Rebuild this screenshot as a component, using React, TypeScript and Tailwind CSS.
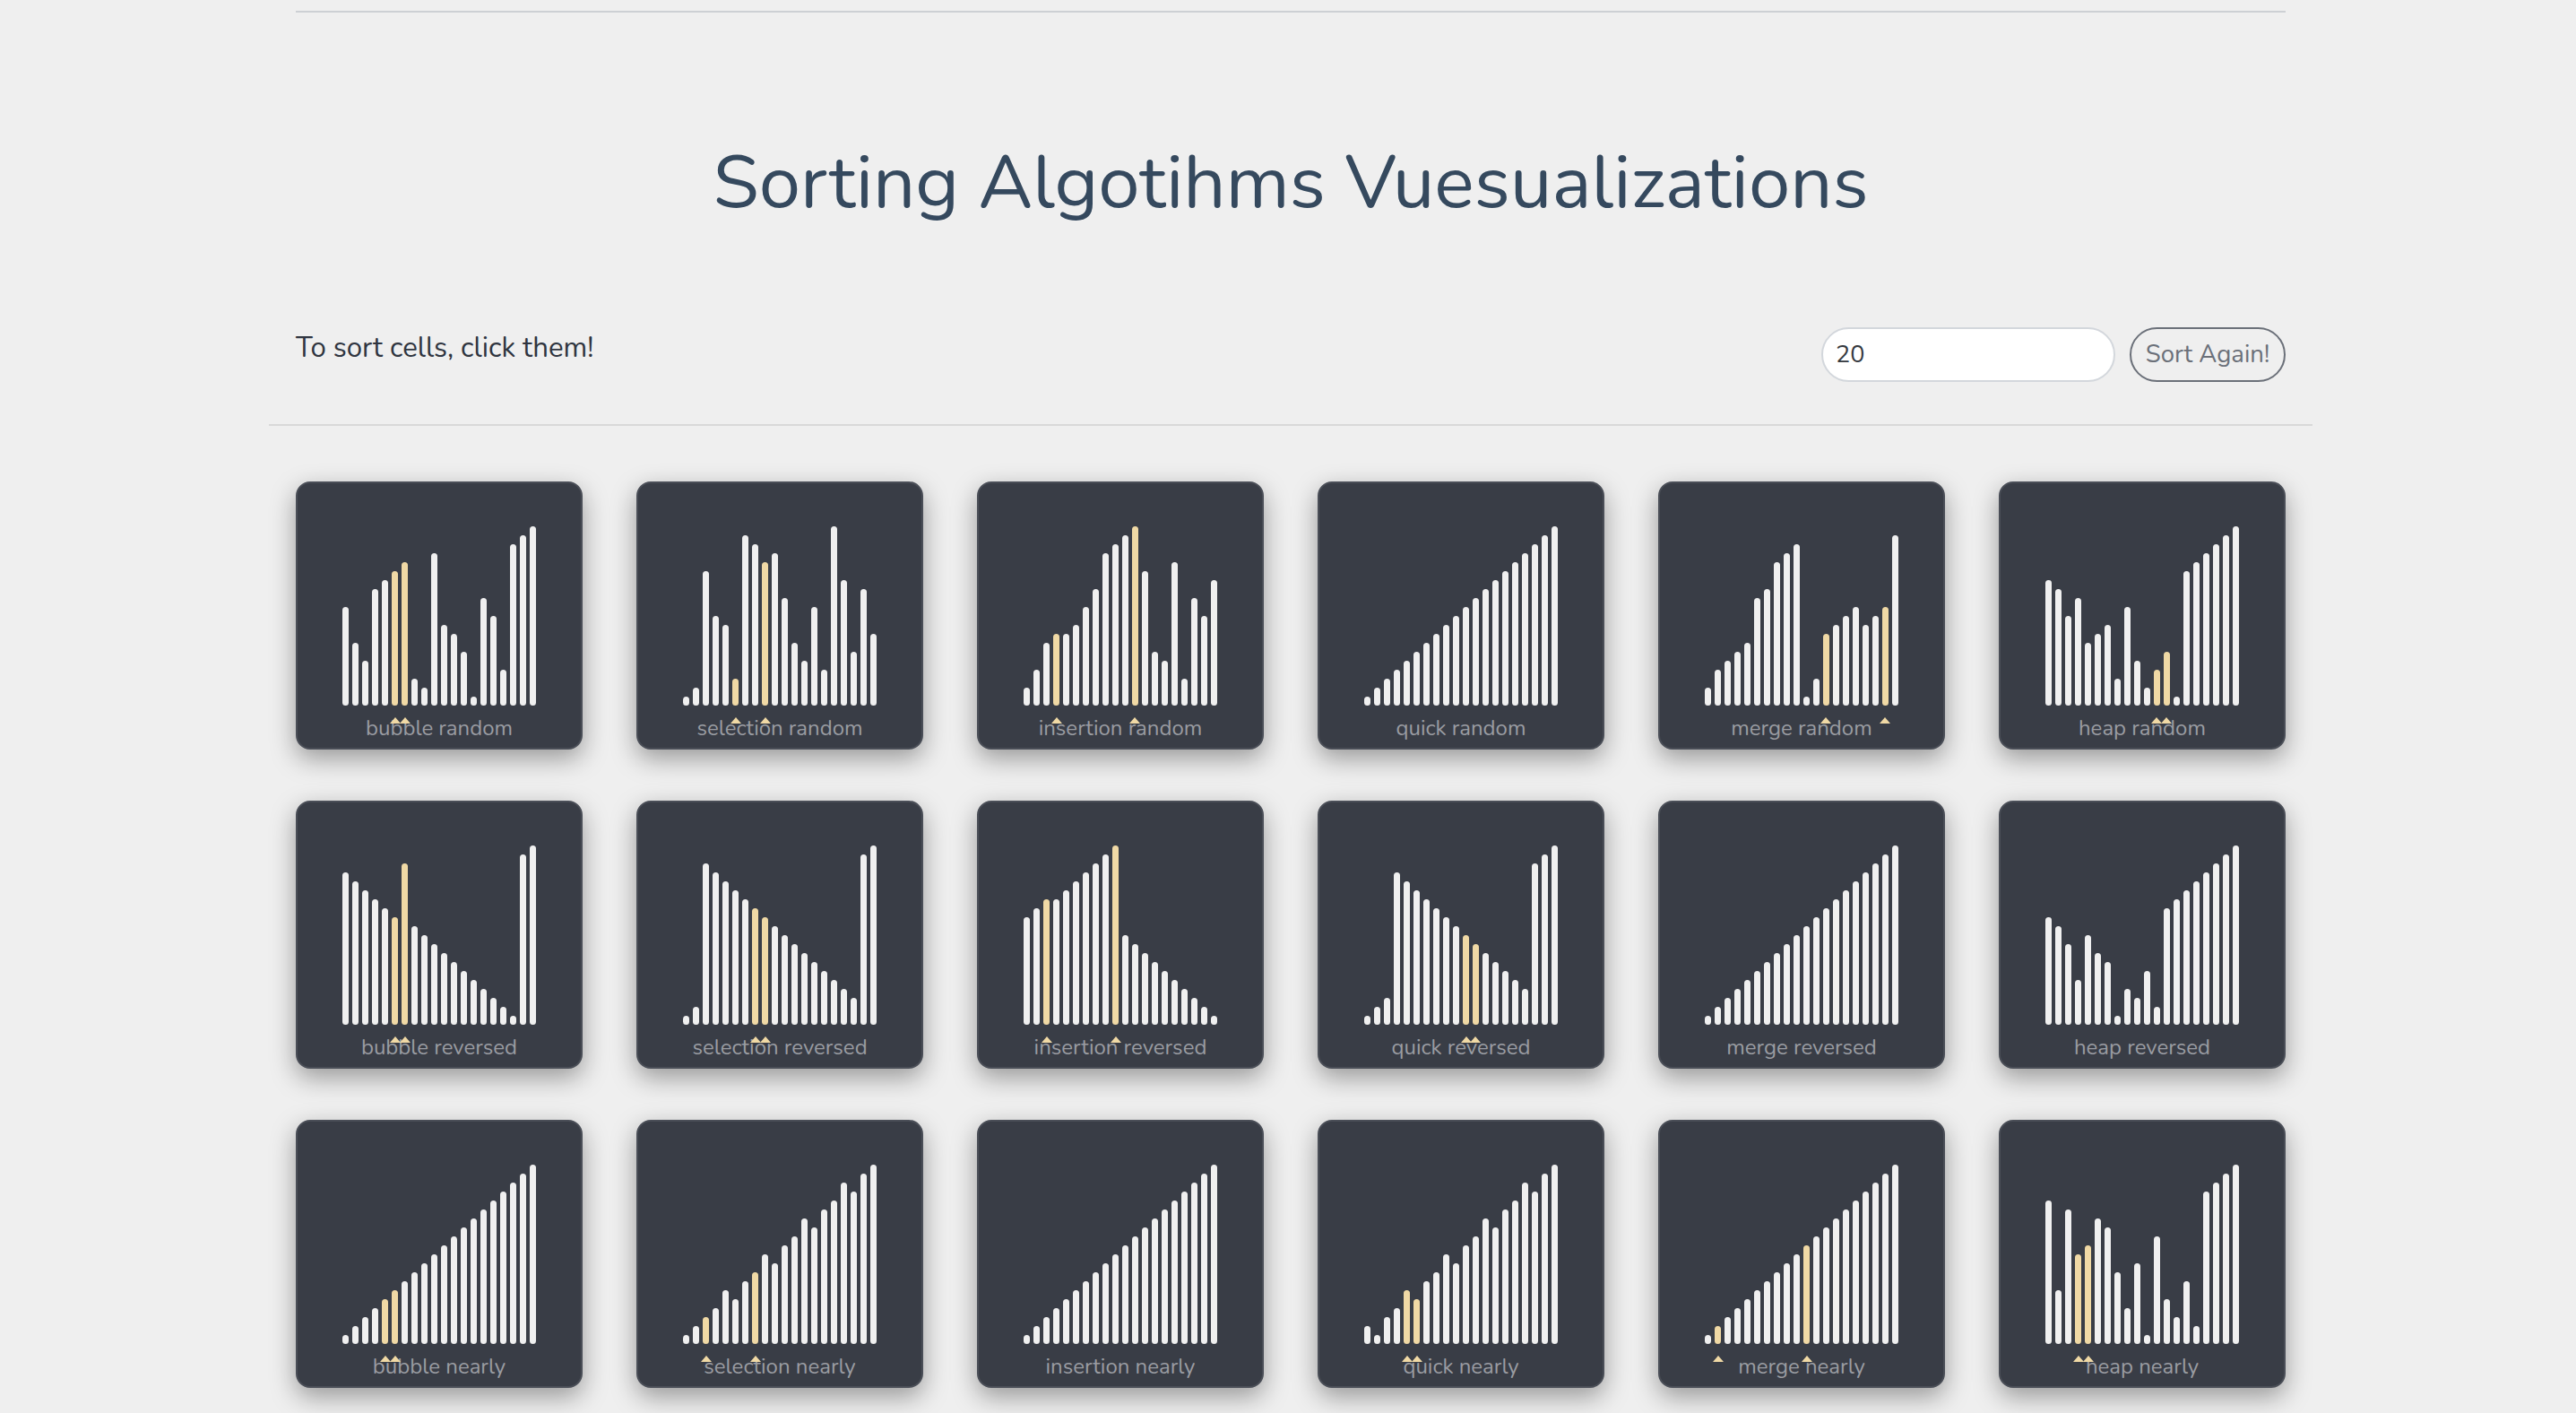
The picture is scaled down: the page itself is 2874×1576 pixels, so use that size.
import React from "react"

type Cell = {
  name: string
  values: number[]
  marks: number[]
}

const asc = Array.from({ length: 20 }, (_, i) => i + 1)

const rows: Cell[][] = [
  [
    { name: "bubble random", values: [11, 7, 5, 13, 14, 15, 16, 3, 2, 17, 9, 8, 6, 1, 12, 10, 4, 18, 19, 20], marks: [5, 6] },
    { name: "selection random", values: [1, 2, 15, 10, 9, 3, 19, 18, 16, 17, 12, 7, 5, 11, 4, 20, 14, 6, 13, 8], marks: [5, 8] },
    { name: "insertion random", values: [2, 4, 7, 8, 8, 9, 11, 13, 17, 18, 19, 20, 15, 6, 5, 16, 3, 12, 10, 14], marks: [3, 11] },
    { name: "quick random", values: asc, marks: [] },
    { name: "merge random", values: [2, 4, 5, 6, 7, 12, 13, 16, 17, 18, 1, 3, 8, 9, 10, 11, 9, 10, 11, 19], marks: [12, 18] },
    { name: "heap random", values: [14, 13, 10, 12, 7, 8, 9, 3, 11, 5, 2, 4, 6, 1, 15, 16, 17, 18, 19, 20], marks: [11, 12] },
  ],
  [
    { name: "bubble reversed", values: [17, 16, 15, 14, 13, 12, 18, 11, 10, 9, 8, 7, 6, 5, 4, 3, 2, 1, 19, 20], marks: [5, 6] },
    { name: "selection reversed", values: [1, 2, 18, 17, 16, 15, 14, 13, 12, 11, 10, 9, 8, 7, 6, 5, 4, 3, 19, 20], marks: [7, 8] },
    { name: "insertion reversed", values: [12, 13, 14, 14, 15, 16, 17, 18, 19, 20, 10, 9, 8, 7, 6, 5, 4, 3, 2, 1], marks: [2, 9] },
    { name: "quick reversed", values: [1, 2, 3, 17, 16, 15, 14, 13, 12, 11, 10, 9, 8, 7, 6, 5, 4, 18, 19, 20], marks: [10, 11] },
    { name: "merge reversed", values: asc, marks: [] },
    { name: "heap reversed", values: [12, 11, 9, 5, 10, 8, 7, 1, 4, 3, 6, 2, 13, 14, 15, 16, 17, 18, 19, 20], marks: [] },
  ],
  [
    { name: "bubble nearly", values: asc, marks: [4, 5] },
    { name: "selection nearly", values: [1, 2, 3, 4, 6, 5, 7, 8, 10, 9, 11, 12, 14, 13, 15, 16, 18, 17, 19, 20], marks: [2, 7] },
    { name: "insertion nearly", values: asc, marks: [] },
    { name: "quick nearly", values: [2, 1, 3, 4, 6, 5, 7, 8, 10, 9, 11, 12, 14, 13, 15, 16, 18, 17, 19, 20], marks: [4, 5] },
    { name: "merge nearly", values: asc, marks: [1, 10] },
    { name: "heap nearly", values: [16, 6, 15, 10, 11, 14, 13, 8, 4, 9, 1, 12, 5, 3, 7, 2, 17, 18, 19, 20], marks: [3, 4] },
  ],
]

const SortCell = ({ cell }: { cell: Cell }) => {
  return (
    <div className="flex h-[299px] w-[320px] flex-col rounded-[16px] border-2 border-[#4a4e57] bg-[#393d46] shadow-[0_10px_28px_rgba(0,0,0,0.36)]">
      <div className="flex h-[248px] items-end justify-center gap-[3.67px]">
        {cell.values.map((v, i) => (
          <div
            key={i}
            className={`w-[7.33px] rounded-full ${cell.marks.includes(i) ? "bg-[#f0d9a5]" : "bg-[#f0f0f0]"}`}
            style={{ height: v * 10 }}
          />
        ))}
      </div>
      <div className="relative mt-[11px] text-center text-[24px] leading-[1.2] text-[#9a9ca2]">
        {cell.name}
        <div className="absolute left-0 right-0 top-[2px] flex justify-center gap-[3.67px]">
          {cell.values.map((_, i) => (
            <div key={i} className="flex w-[7.33px] justify-center">
              {cell.marks.includes(i) && (
                <div className="h-0 w-0 shrink-0 border-x-[6px] border-b-[7px] border-x-transparent border-b-[#f0d9a5]" />
              )}
            </div>
          ))}
        </div>
      </div>
    </div>
  )
}

export default function App() {
  return (
    <div className="min-h-screen bg-[#efefef] font-['Nunito','Lato','Noto_Sans',sans-serif]">
      <div className="ml-[300px] w-[2280px] pb-[60px] pt-[12px]">
        <div className="px-[30px]">
          <div className="border-t-2 border-[#cdd0d4]" />
          <h1 className="mt-[148px] text-center text-[83.3px] font-normal leading-none text-[#35495e]">
            Sorting Algotihms Vuesualizations
          </h1>
          <div className="mt-[120px] flex items-start justify-between">
            <p className="pt-[4px] text-[31.2px] leading-[1.2] text-[#2f3540]">To sort cells, click them!</p>
            <div className="flex items-center gap-[16px]">
              <input
                defaultValue="20"
                className="h-[61px] w-[328px] rounded-full border-2 border-[#d3d7dc] bg-white pl-[14px] text-[27px] text-[#35393f] outline-none"
              />
              <button className="h-[61px] w-[174px] rounded-full border-2 border-[#6b7079] text-[27.5px] text-[#6b7079]">
                Sort Again!
              </button>
            </div>
          </div>
        </div>
        <div className="mt-[47px] border-t-2 border-[#d9d9d9]" />
        <div className="mt-[62px] px-[30px]">
          <div className="grid grid-cols-[repeat(6,320px)] gap-x-[60px] gap-y-[57px]">
            {rows.flat().map((cell) => (
              <SortCell key={cell.name} cell={cell} />
            ))}
          </div>
        </div>
      </div>
    </div>
  )
}
